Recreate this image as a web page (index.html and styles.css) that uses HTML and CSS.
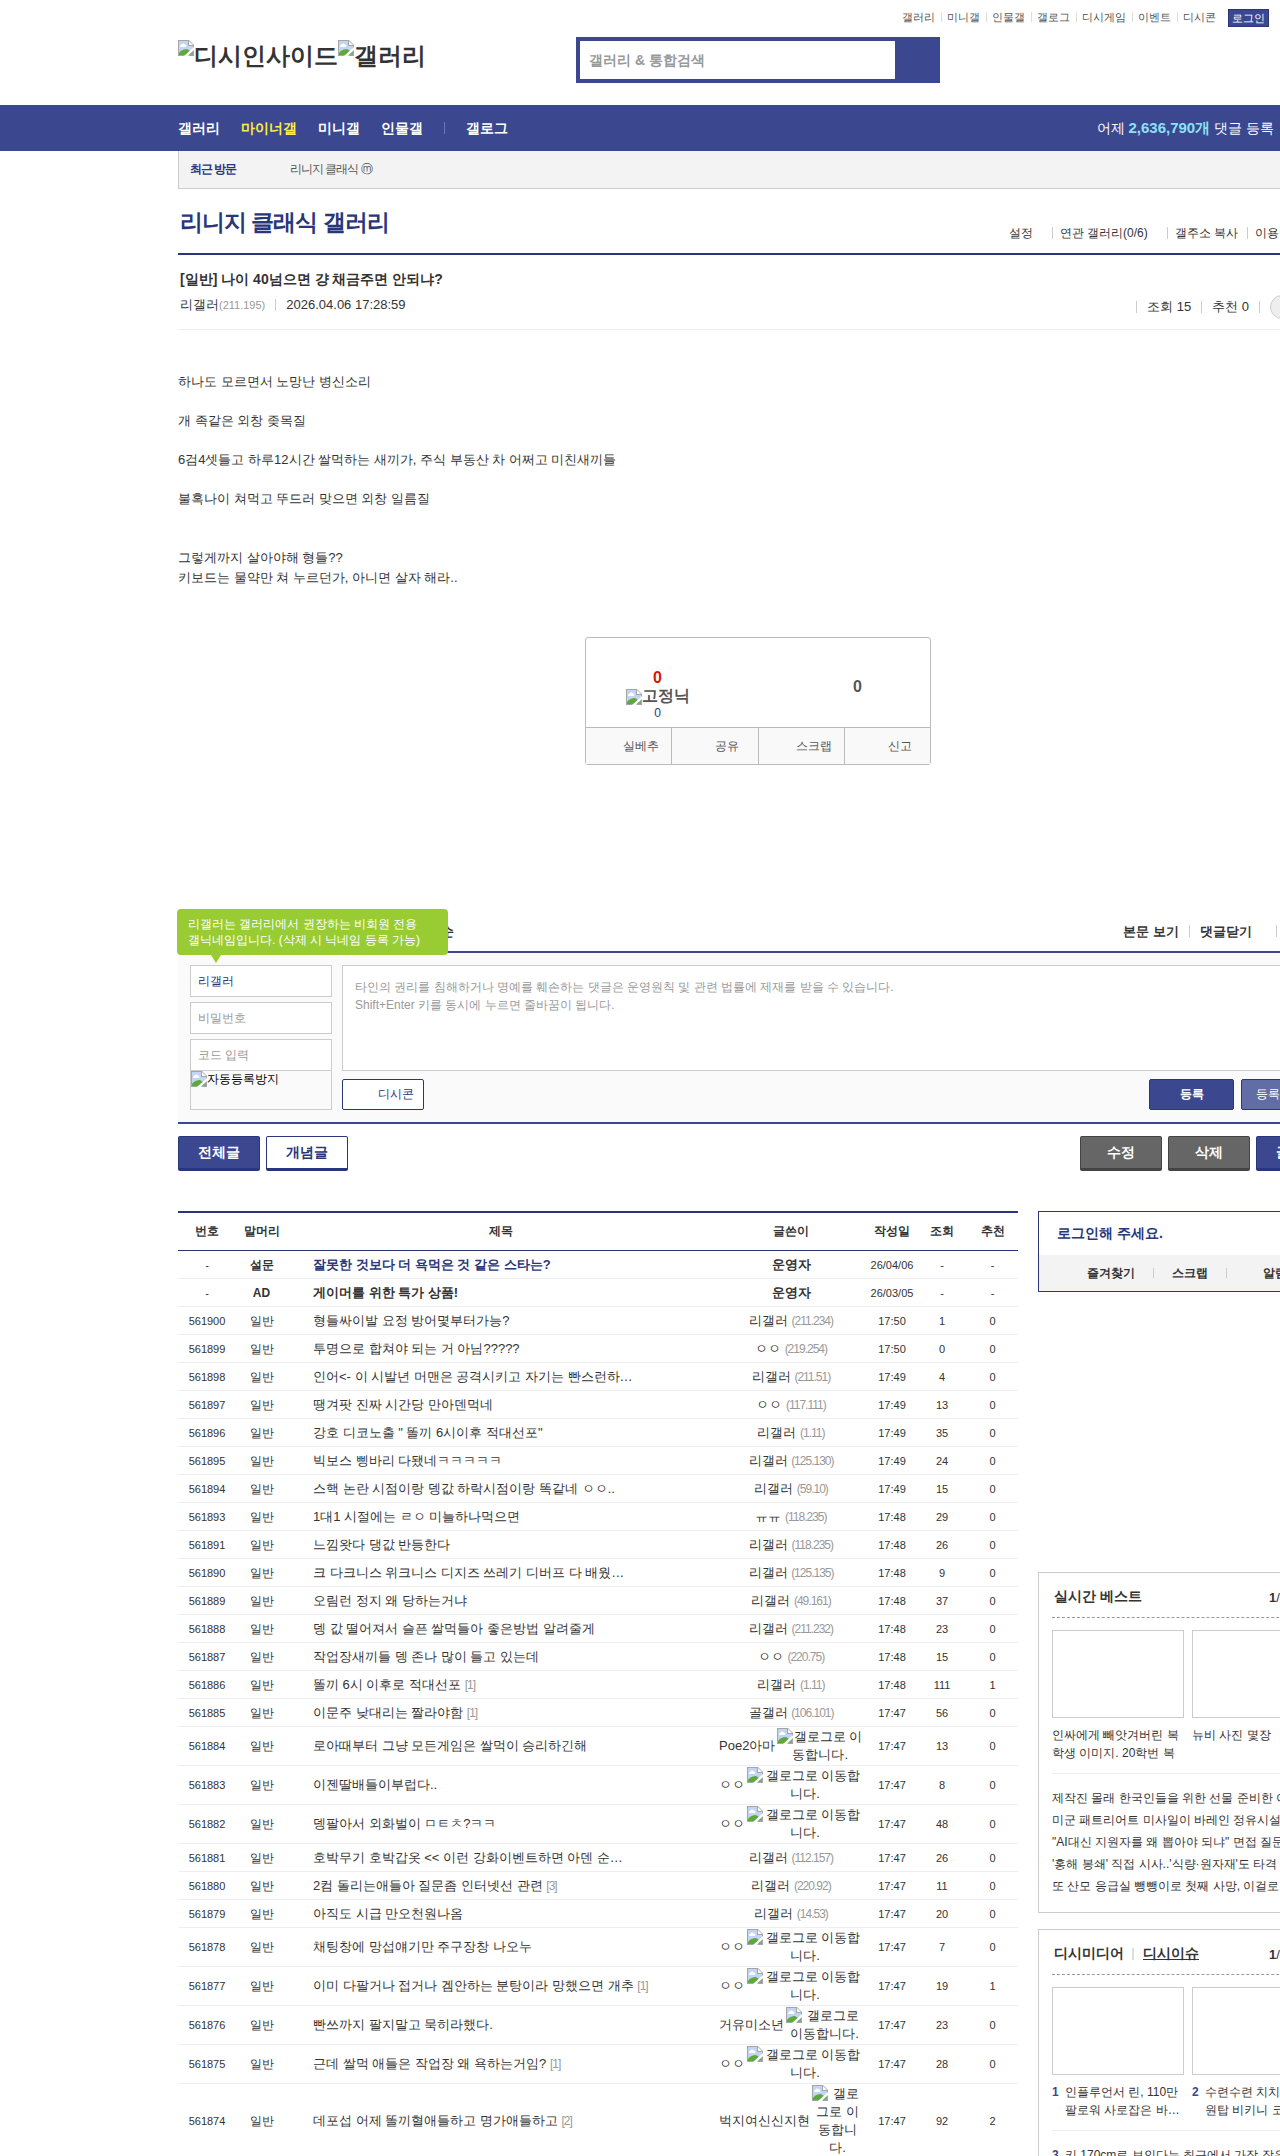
FILE: index.html
```html
<!DOCTYPE html>
<html lang="ko">
<head>
<meta charset="utf-8">
<title>리니지 클래식 갤러리</title>
<link rel="stylesheet" href="styles.css">
</head>
<body>
<svg class="defs" aria-hidden="true">
  <symbol id="noimg" viewBox="0 0 16 16">
    <path d="M0 0h11l5 5v11H0z" fill="#a6a6a6"/>
    <path d="M1 1h9v5h5v9H1z" fill="#c3d5f5"/>
    <path d="M2 6.500a2 2 0 0 1 1.500-2 2 2 0 0 1 3.500 0A1.500 1.500 0 0 1 8 7H2.500z" fill="#fff"/>
    <path d="M1 15v-2c2-3 5-4 8-4l3 2 3 4z" fill="#5caa3c"/>
    <path d="M11 1v4h4z" fill="#fff"/>
    <path d="M16 7v3L10 16H6z" fill="#fff"/>
    <path d="M15 11v4h-4z" fill="#7fa58a"/>
  </symbol>
</svg>
<div class="page">
<header class="wrap header">
  <nav class="top-links">
    <ul>
      <li><a href="#">갤러리</a></li><li><a href="#">미니갤</a></li><li><a href="#">인물갤</a></li><li><a href="#">갤로그</a></li><li><a href="#">디시게임</a></li><li><a href="#">이벤트</a></li><li><a href="#">디시콘</a></li>
    </ul>
    <a class="login" href="#">로그인</a>
  </nav>
  <div class="brand">
    <h1 class="logo"><a href="#"><svg class="noimg"><use href="#noimg"/></svg>디시인사이드</a><a href="#"><svg class="noimg"><use href="#noimg"/></svg>갤러리</a></h1>
    <form class="search">
      <input type="text" aria-label="검색" placeholder="갤러리 &amp; 통합검색">
      <button type="button" aria-label="검색"></button>
    </form>
  </div>
</header>

<div class="gnb">
  <div class="wrap gnb-in">
    <nav>
      <a href="#">갤러리</a><a class="on" href="#">마이너갤</a><a href="#">미니갤</a><a href="#">인물갤</a><i class="bar"></i><a href="#">갤로그</a>
    </nav>
    <p>어제 <strong>2,636,790개</strong> 댓글 등록</p>
  </div>
</div>

<main class="wrap">
  <div class="visited"><strong>최근 방문</strong><a href="#">리니지 클래식 ⓜ</a></div>

  <div class="gall-head">
    <h2><a href="#">리니지 클래식 갤러리</a></h2>
    <ul>
      <li class="wide"><a href="#">설정</a></li><li class="wide"><a href="#">연관 갤러리(0/6)</a></li><li><a href="#">갤주소 복사</a></li><li><a href="#">이용안내</a></li>
    </ul>
  </div>

  <article>
    <div class="post-head">
      <h3>[일반] 나이 40넘으면 걍 채금주면 안되냐?</h3>
      <div class="post-info">
        <div class="by"><span>리갤러<small>(211.195)</small></span><i class="bar"></i><time>2026.04.06 17:28:59</time></div>
        <div class="stats"><i class="bar"></i><span>조회 15</span><i class="bar"></i><span>추천 0</span><i class="bar"></i><a class="pill" href="#">댓글 0</a></div>
      </div>
    </div>
    <div class="post-body">
      <p>하나도 모르면서 노망난 병신소리</p>
      <p>개 족같은 외창 좆목질</p>
      <p>6검4셋들고 하루12시간 쌀먹하는 새끼가, 주식 부동산 차 어쩌고 미친새끼들</p>
      <p>불혹나이 쳐먹고 뚜드러 맞으면 외창 일름질</p>
      <p class="last">그렇게까지 살아야해 형들??<br>키보드는 물약만 쳐 누르던가, 아니면 살자 해라..</p>
    </div>
    <div class="vote">
      <div class="vote-top">
        <div class="up"><strong class="red">0</strong><strong class="fix"><svg class="noimg"><use href="#noimg"/></svg>고정닉</strong><span>0</span></div>
        <div class="down"><strong>0</strong></div>
      </div>
      <div class="vote-btns">
        <button type="button">실베추</button><button type="button">공유</button><button type="button">스크랩</button><button type="button">신고</button>
      </div>
    </div>
  </article>

  <section class="comment">
    <div class="comment-head">
      <span class="order">등록순</span>
      <div class="links"><a href="#">본문 보기</a><i class="bar"></i><a class="fold" href="#">댓글닫기</a><i class="bar"></i><a href="#">새로고침</a></div>
    </div>
    <form class="comment-form">
      <div class="tip">리갤러는 갤러리에서 권장하는 비회원 전용<br>갤닉네임입니다. (삭제 시 닉네임 등록 가능)</div>
      <div class="who">
        <input type="text" aria-label="닉네임" value="리갤러">
        <input type="password" aria-label="비밀번호" placeholder="비밀번호">
        <div><input type="text" aria-label="코드 입력" placeholder="코드 입력">
        <div class="captcha"><svg class="noimg"><use href="#noimg"/></svg>자동등록방지</div></div>
      </div>
      <div class="write">
        <textarea aria-label="댓글" placeholder="타인의 권리를 침해하거나 명예를 훼손하는 댓글은 운영원칙 및 관련 법률에 제재를 받을 수 있습니다.&#10;Shift+Enter 키를 동시에 누르면 줄바꿈이 됩니다."></textarea>
        <div class="write-btns">
          <button type="button" class="dccon">디시콘</button>
          <button type="button" class="send">등록</button>
          <button type="button" class="send light">등록+추천</button>
        </div>
      </div>
    </form>
  </section>

  <div class="actions">
    <button type="button" class="btn blue">전체글</button><button type="button" class="btn white">개념글</button>
    <button type="button" class="btn gray push">수정</button><button type="button" class="btn gray">삭제</button><button type="button" class="btn blue">글쓰기</button>
  </div>

  <div class="cols">
    <table class="list">
      <colgroup><col class="c-no"><col class="c-tag"><col><col class="c-by"><col class="c-s"><col class="c-s"><col class="c-rec"></colgroup>
      <thead><tr><th>번호</th><th>말머리</th><th>제목</th><th>글쓴이</th><th>작성일</th><th>조회</th><th>추천</th></tr></thead>
      <tbody>
        <tr class="notice"><td>-</td><td>설문</td><td><a class="navy" href="#">잘못한 것보다 더 욕먹은 것 같은 스타는?</a></td><td>운영자</td><td>26/04/06</td><td>-</td><td>-</td></tr>
        <tr class="notice"><td>-</td><td>AD</td><td><a href="#">게이머를 위한 특가 상품!</a></td><td>운영자</td><td>26/03/05</td><td>-</td><td>-</td></tr>
        <tr><td>561900</td><td>일반</td><td><a href="#">형들싸이발 요정 방어몇부터가능?</a></td><td>리갤러 <small>(211.234)</small></td><td>17:50</td><td>1</td><td>0</td></tr>
        <tr><td>561899</td><td>일반</td><td><a href="#">투명으로 합쳐야 되는 거 아님?????</a></td><td>ㅇㅇ <small>(219.254)</small></td><td>17:50</td><td>0</td><td>0</td></tr>
        <tr><td>561898</td><td>일반</td><td><a href="#">인어&lt;- 이 시발년 머맨은 공격시키고 자기는 빤스런하…</a></td><td>리갤러 <small>(211.51)</small></td><td>17:49</td><td>4</td><td>0</td></tr>
        <tr><td>561897</td><td>일반</td><td><a href="#">땡겨팟 진짜 시간당 만아덴먹네</a></td><td>ㅇㅇ <small>(117.111)</small></td><td>17:49</td><td>13</td><td>0</td></tr>
        <tr><td>561896</td><td>일반</td><td><a href="#">강호 디코노출 " 똘끼 6시이후 적대선포"</a></td><td>리갤러 <small>(1.11)</small></td><td>17:49</td><td>35</td><td>0</td></tr>
        <tr><td>561895</td><td>일반</td><td><a href="#">빅보스 삥바리 다됐네ㅋㅋㅋㅋㅋ</a></td><td>리갤러 <small>(125.130)</small></td><td>17:49</td><td>24</td><td>0</td></tr>
        <tr><td>561894</td><td>일반</td><td><a href="#">스핵 논란 시점이랑 뎅값 하락시점이랑 똑같네 ㅇㅇ..</a></td><td>리갤러 <small>(59.10)</small></td><td>17:49</td><td>15</td><td>0</td></tr>
        <tr><td>561893</td><td>일반</td><td><a href="#">1대1 시절에는 ㄹㅇ 미늘하나먹으면</a></td><td>ㅠㅠ <small>(118.235)</small></td><td>17:48</td><td>29</td><td>0</td></tr>
        <tr><td>561891</td><td>일반</td><td><a href="#">느낌왓다 댕값 반등한다</a></td><td>리갤러 <small>(118.235)</small></td><td>17:48</td><td>26</td><td>0</td></tr>
        <tr><td>561890</td><td>일반</td><td><a href="#">크 다크니스 위크니스 디지즈 쓰레기 디버프 다 배웠…</a></td><td>리갤러 <small>(125.135)</small></td><td>17:48</td><td>9</td><td>0</td></tr>
        <tr><td>561889</td><td>일반</td><td><a href="#">오림런 정지 왜 당하는거냐</a></td><td>리갤러 <small>(49.161)</small></td><td>17:48</td><td>37</td><td>0</td></tr>
        <tr><td>561888</td><td>일반</td><td><a href="#">뎅 값 떨어져서 슬픈 쌀먹들아 좋은방법 알려줄게</a></td><td>리갤러 <small>(211.232)</small></td><td>17:48</td><td>23</td><td>0</td></tr>
        <tr><td>561887</td><td>일반</td><td><a href="#">작업장새끼들 뎅 존나 많이 들고 있는데</a></td><td>ㅇㅇ <small>(220.75)</small></td><td>17:48</td><td>15</td><td>0</td></tr>
        <tr><td>561886</td><td>일반</td><td><a href="#">똘끼 6시 이후로 적대선포</a> <a class="re" href="#">[1]</a></td><td>리갤러 <small>(1.11)</small></td><td>17:48</td><td>111</td><td>1</td></tr>
        <tr><td>561885</td><td>일반</td><td><a href="#">이문주 낮대리는 짤라야함</a> <a class="re" href="#">[1]</a></td><td>골갤러 <small>(106.101)</small></td><td>17:47</td><td>56</td><td>0</td></tr>
        <tr><td>561884</td><td>일반</td><td><a href="#">로아때부터 그냥 모든게임은 쌀먹이 승리하긴해</a></td><td><div class="nick"><span>Poe2아마</span><span class="alt"><svg class="noimg"><use href="#noimg"/></svg>갤로그로 이동합니다.</span></div></td><td>17:47</td><td>13</td><td>0</td></tr>
        <tr><td>561883</td><td>일반</td><td><a href="#">이젠딸배들이부럽다..</a></td><td><div class="nick"><span>ㅇㅇ</span><span class="alt"><svg class="noimg"><use href="#noimg"/></svg>갤로그로 이동합니다.</span></div></td><td>17:47</td><td>8</td><td>0</td></tr>
        <tr><td>561882</td><td>일반</td><td><a href="#">뎅팔아서 외화벌이 ㅁㅌㅊ?ㅋㅋ</a></td><td><div class="nick"><span>ㅇㅇ</span><span class="alt"><svg class="noimg"><use href="#noimg"/></svg>갤로그로 이동합니다.</span></div></td><td>17:47</td><td>48</td><td>0</td></tr>
        <tr><td>561881</td><td>일반</td><td><a href="#">호박무기 호박갑옷 &lt;&lt; 이런 강화이벤트하면 아덴 순…</a></td><td>리갤러 <small>(112.157)</small></td><td>17:47</td><td>26</td><td>0</td></tr>
        <tr><td>561880</td><td>일반</td><td><a href="#">2컴 돌리는애들아 질문좀 인터넷선 관련</a> <a class="re" href="#">[3]</a></td><td>리갤러 <small>(220.92)</small></td><td>17:47</td><td>11</td><td>0</td></tr>
        <tr><td>561879</td><td>일반</td><td><a href="#">아직도 시급 만오천원나옴</a></td><td>리갤러 <small>(14.53)</small></td><td>17:47</td><td>20</td><td>0</td></tr>
        <tr><td>561878</td><td>일반</td><td><a href="#">채팅창에 망섭얘기만 주구장창 나오누</a></td><td><div class="nick"><span>ㅇㅇ</span><span class="alt"><svg class="noimg"><use href="#noimg"/></svg>갤로그로 이동합니다.</span></div></td><td>17:47</td><td>7</td><td>0</td></tr>
        <tr><td>561877</td><td>일반</td><td><a href="#">이미 다팔거나 접거나 겜안하는 분탕이라 망했으면 개추</a> <a class="re" href="#">[1]</a></td><td><div class="nick"><span>ㅇㅇ</span><span class="alt"><svg class="noimg"><use href="#noimg"/></svg>갤로그로 이동합니다.</span></div></td><td>17:47</td><td>19</td><td>1</td></tr>
        <tr><td>561876</td><td>일반</td><td><a href="#">빤쓰까지 팔지말고 묵히라했다.</a></td><td><div class="nick"><span>거유미소년</span><span class="alt"><svg class="noimg"><use href="#noimg"/></svg>갤로그로 이동합니다.</span></div></td><td>17:47</td><td>23</td><td>0</td></tr>
        <tr><td>561875</td><td>일반</td><td><a href="#">근데 쌀먹 애들은 작업장 왜 욕하는거임?</a> <a class="re" href="#">[1]</a></td><td><div class="nick"><span>ㅇㅇ</span><span class="alt"><svg class="noimg"><use href="#noimg"/></svg>갤로그로 이동합니다.</span></div></td><td>17:47</td><td>28</td><td>0</td></tr>
        <tr><td>561874</td><td>일반</td><td><a href="#">데포섭 어제 똘끼혈애들하고 명가애들하고</a> <a class="re" href="#">[2]</a></td><td><div class="nick"><span>벅지여신신지현</span><span class="alt"><svg class="noimg"><use href="#noimg"/></svg>갤로그로 이동합니다.</span></div></td><td>17:47</td><td>92</td><td>2</td></tr>
      </tbody>
    </table>

    <aside>
      <div class="login-box">
        <strong>로그인해 주세요.</strong>
        <div><a href="#">즐겨찾기</a><i class="bar"></i><a href="#">스크랩</a><i class="bar"></i><a class="alarm" href="#">알림</a></div>
      </div>
      <section class="box best">
        <div class="box-head"><h4>실시간 베스트</h4><span><b>1</b>/8</span></div>
        <div class="cards">
          <a href="#"><span class="thumb"></span><span class="cap">인싸에게 빼앗겨버린 복학생 이미지. 20학번 복</span></a>
          <a href="#"><span class="thumb"></span><span class="cap">뉴비 사진 몇장</span></a>
        </div>
        <ul>
          <li><a href="#">제작진 몰래 한국인들을 위한 선물 준비한 이</a></li>
          <li><a href="#">미군 패트리어트 미사일이 바레인 정유시설</a></li>
          <li><a href="#">"AI대신 지원자를 왜 뽑아야 되냐" 면접 질문</a></li>
          <li><a href="#">'홍해 봉쇄' 직접 시사..'식량·원자재'도 타격</a></li>
          <li><a href="#">또 산모 응급실 뺑뺑이로 첫째 사망, 이걸로</a></li>
        </ul>
      </section>
      <section class="box">
        <div class="box-head"><h4>디시미디어</h4><i class="bar"></i><h4><a class="under" href="#">디시이슈</a></h4><span><b>1</b>/2</span></div>
        <div class="cards">
          <a href="#"><span class="thumb"></span><span class="cap num"><b>1</b><span>인플루언서 린, 110만 팔로워 사로잡은 바…</span></span></a>
          <a href="#"><span class="thumb"></span><span class="cap num"><b>2</b><span>수련수련 치치,<br>원탑 비키니 코스</span></span></a>
        </div>
        <ul>
          <li class="num"><b>3</b><a href="#">키 170cm로 보인다는 최근에서 가장 작은</a></li>
        </ul>
      </section>
    </aside>
  </div>
</main>
</div>
</body>
</html>
```
FILE: styles.css
```css
* { box-sizing: border-box; }
html { overflow: hidden; }
body, h1, h2, h3, h4, p, ul { margin: 0; padding: 0; }
body, input, textarea, button {
  font-family: "Liberation Sans", sans-serif;
  color: #333;
}
body { font-size: 13px; background: #fff; }
ul { list-style: none; }
a { color: inherit; text-decoration: none; }
button { cursor: pointer; padding: 0; }
input, textarea { border-radius: 0; outline: 0; }
input::placeholder, textarea::placeholder { color: #999; opacity: 1; }
.defs { display: none; }
.noimg { width: 16px; height: 16px; flex: none; }
.bar { width: 1px; height: 12px; background: #ccc; }

.page { min-width: 1516px; }
.wrap { width: 1160px; margin: 0 auto; }

/* header */
.header { padding: 9px 0 22px; }
.top-links { display: flex; justify-content: flex-end; margin-right: 69px; font-size: 11px; color: #555; line-height: 16px; }
.top-links ul { display: flex; margin-right: 11px; }
.top-links li { padding-right: 1px; }
.top-links li + li { margin-left: 5px; padding-left: 6px; background: linear-gradient(#ddd, #ddd) left 3px / 1px 10px no-repeat; }
.login { height: 18px; padding: 0 3px; border: 1px solid #29367c; background: #3b4890; color: #fff; line-height: 17px; }
.brand { display: flex; margin-top: 10px; }
.logo { width: 398px; padding-top: 3px; font-size: 24px; line-height: 32px; display: flex; }
.logo a { display: flex; }
.search { display: flex; width: 364px; height: 46px; padding: 4px; background: #3b4890; }
.search input { width: 315px; border: 0; padding: 0 9px; background: #fff; font-size: 14px; font-weight: bold; }
.search button { flex: 1; border: 0; background: none; }

.gnb { background: #3b4890; color: #fff; font-size: 14px; line-height: 46px; }
.gnb-in { display: flex; justify-content: space-between; }
.gnb nav { display: flex; align-items: center; gap: 21px; font-weight: bold; }
.gnb nav .bar { background: #6b77b5; }
.gnb .on { color: #ffed43; }
.gnb p { height: 46px; margin-right: 64px; }
.gnb strong { color: #8de1f5; font-size: 15px; }

.visited { display: flex; height: 38px; padding-left: 11px; border: 1px solid #ccc; border-top: 0; background: #f3f3f3; font-size: 12px; line-height: 37px; letter-spacing: -1px; color: #555; }
.visited strong { width: 100px; color: #29367c; }

.gall-head { display: flex; justify-content: space-between; height: 66px; padding: 14px 0 0 2px; border-bottom: 2px solid #29367c; }
.gall-head h2 { font-size: 23px; line-height: 38px; letter-spacing: -1px; color: #29367c; }
.gall-head ul { display: flex; font-size: 12px; line-height: 20px; padding-top: 20px; margin-right: 26px; }
.gall-head li { padding-right: 9px; }
.gall-head li + li { padding-left: 8px; background: linear-gradient(#ccc, #ccc) left 4px / 1px 12px no-repeat; }
.gall-head .wide { padding-right: 19px; }

/* post */
.post-head { padding: 14px 0; border-bottom: 1px solid #eee; line-height: 20px; }
.post-head h3 { padding-left: 2px; font-size: 14px; }
.post-info { display: flex; justify-content: space-between; margin-top: 6px; padding-left: 2px; }
.by, .stats { display: flex; align-items: center; gap: 10px; }
.post-info small { font-size: 11px; color: #999; }
.stats { height: 24px; margin: 0 0 -4px; }
.pill { width: 68px; height: 24px; border: 1px solid #ccc; border-radius: 12px; background: #eee; text-align: center; }
.post-body { padding-top: 42px; line-height: 20px; }
.post-body p { margin-bottom: 19px; }
.post-body .last { margin: 39px 0 0; }

.vote { width: 346px; margin: 49px auto 0; border: 1px solid #bbb; border-radius: 3px; }
.vote-top { display: flex; height: 89px; font-size: 16px; color: #555; }
.up { display: flex; flex-direction: column; align-items: center; width: 143px; padding-top: 31px; line-height: 18px; }
.up .red { color: #d31900; }
.up .fix { display: flex; align-items: flex-end; }
.up span { font-size: 12px; color: #29367c; line-height: 16px; }
.down { flex: 1; padding-left: 56px; line-height: 97px; text-align: center; }
.vote-btns { display: flex; height: 37px; border-top: 1px solid #bbb; background: #f9f9f9; }
.vote-btns button { flex: 1; padding-left: 25px; border: 0; background: none; font-size: 12px; color: #555; }
.vote-btns button + button { border-left: 1px solid #bbb; }

/* comments */
.comment { margin-top: 157px; }
.comment-head { display: flex; justify-content: space-between; height: 29px; font-weight: bold; line-height: 20px; }
.order { padding-left: 237px; }
.links { display: flex; gap: 10px; margin-right: -1px; }
.links .bar { margin-top: 3px; }
.links .fold { padding-right: 14px; }
.comment-form { position: relative; display: flex; gap: 10px; padding: 12px; border: solid #3b4890; border-width: 2px 0; background: #fafafa; font-size: 12px; }
.comment-form input { display: block; width: 100%; height: 32px; padding: 0 7px; border: 1px solid #ccc; background: #fff; font-size: 12px; }
.comment-form input[type="text"] { color: #29367c; }
.who { display: flex; flex-direction: column; gap: 5px; width: 142px; }
.captcha { display: flex; height: 39px; border: 1px solid #ccc; border-top: 0; color: #000; line-height: 16px; }
.write { flex: 1; }
.write textarea { display: block; width: 100%; height: 106px; padding: 12px; border: 1px solid #ccc; font-size: 12px; line-height: 18px; resize: none; }
.write-btns { display: flex; gap: 7px; margin-top: 8px; }
.write-btns button { height: 31px; border: 1px solid #29367c; border-radius: 2px; font-size: 12px; }
.write-btns .dccon { width: 82px; margin-right: auto; padding-left: 26px; background: #fff; color: #29367c; }
.write-btns .send { width: 85px; background: #3b4890; color: #fff; font-weight: bold; }
.write-btns .light { background: #626da6; font-weight: normal; }
.tip { position: absolute; left: -1px; top: -44px; width: 271px; padding: 7px 11px; border-radius: 4px; background: #9c3; color: #fff; line-height: 16px; }
.tip::after { content: ""; position: absolute; left: 34px; top: 46px; border: solid transparent; border-width: 8px 5px 0; border-top-color: #9c3; }

.actions { display: flex; gap: 6px; margin: 12px 0 40px; }
.btn { width: 82px; height: 35px; border: 1px solid; border-bottom-width: 3px; border-radius: 2px; font-size: 14px; font-weight: bold; }
.blue { background: #3b4890; border-color: #29367c; color: #fff; }
.white { background: #fff; border-color: #29367c; color: #29367c; }
.gray { background: #666; border-color: #444; color: #fff; }
.push { margin-left: auto; }

/* list */
.cols { display: flex; align-items: flex-start; gap: 20px; }
.list { width: 840px; table-layout: fixed; border-collapse: separate; border-spacing: 0; border-top: 2px solid #29367c; }
.c-no { width: 58px; }
.c-tag { width: 51px; }
.c-by { width: 152px; }
.c-s { width: 50px; }
.c-rec { width: 51px; }
th { height: 38px; padding: 0; border-bottom: 1px solid #29367c; font-size: 12px; }
td { height: 28px; padding: 1px 0; border-bottom: 1px solid #eee; text-align: center; font-size: 11px; line-height: 18px; }
td:nth-child(2) { font-size: 12px; }
td:nth-child(3) { padding-left: 26px; text-align: left; font-size: 13px; }
td:nth-child(4) { font-size: 13px; padding: 1px 4px; }
td small { font-size: 12px; letter-spacing: -1px; color: #999; }
.notice td:nth-child(n+2):nth-child(-n+4) { font-weight: bold; }
.navy { color: #29367c; }
.re { font-size: 12px; letter-spacing: -1px; color: #999; }
.nick { display: flex; align-items: center; gap: 2px; white-space: nowrap; }
.alt { flex: 1; white-space: normal; }
.alt .noimg { float: left; }

/* sidebar */
aside { width: 300px; }
.login-box { border: 1px solid #29367c; }
.login-box strong { display: block; padding-left: 18px; font-size: 14px; line-height: 43px; color: #29367c; }
.login-box div { display: flex; align-items: center; gap: 18px; height: 36px; padding-left: 48px; background: #f3f3f3; font-size: 12px; font-weight: bold; }
.login-box .bar { height: 10px; }
.login-box .alarm { padding-left: 18px; }
.box { margin-top: 16px; padding: 0 13px 15px; border: 1px solid #ccc; }
.best { margin-top: 280px; }
.box-head { display: flex; align-items: center; height: 45px; padding: 4px 16px 0 2px; border-bottom: 1px dashed #999; }
.box-head h4 { font-size: 14px; }
.box-head .bar { width: 2px; background: #ddd; margin: 0 9px 0 8px; }
.box-head span { margin-left: auto; width: 39px; }
.under { text-decoration: underline; }
.cards { display: flex; gap: 8px; padding: 12px 0 11px; border-bottom: 1px solid #eee; }
.cards a { width: 132px; }
.thumb { display: block; height: 88px; margin-bottom: 8px; border: 1px solid #ccc; }
.cap { display: block; height: 36px; overflow: hidden; font-size: 12px; line-height: 18px; }
.num { display: flex; }
.num b { width: 13px; color: #3b4890; flex: none; }
.box ul { padding-top: 13px; font-size: 12px; line-height: 22px; }
.box li { white-space: nowrap; overflow: hidden; }
```
